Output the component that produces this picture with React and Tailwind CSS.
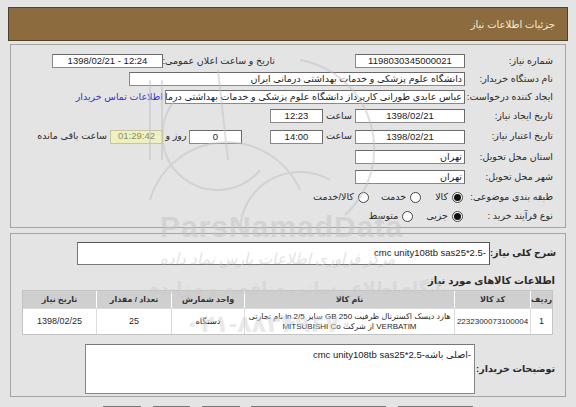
import React from "react";

const inp = "h-[14px] bg-white border border-[#8a8a8a] border-t-[#6a6a6a] border-r-[#6a6a6a] flex items-center text-[9.5px] text-[#222] leading-none overflow-hidden whitespace-nowrap";
const txt = "text-[9.5px] text-[#2a2a2a] whitespace-nowrap";

function Radio({ on }) {
  return (
    <span className="inline-flex w-[11px] h-[11px] rounded-full border border-[#444] bg-white items-center justify-center shrink-0">
      {on ? <span className="w-[7px] h-[7px] rounded-full bg-[#111]" /> : null}
    </span>
  );
}

function Label({ children, w = "w-[88px]" }) {
  return <div className={`${w} shrink-0 ${txt}`}>{children}</div>;
}

export default function App() {
  return (
    <div
      dir="rtl"
      className="relative w-[576px] h-[407px] overflow-hidden bg-[#e4e4e4]"
      style={{ fontFamily: '"Liberation Sans", "DejaVu Sans", Tahoma, sans-serif' }}
    >
      {/* header */}
      <div className="mt-[7px] mx-[8px] h-[34px] bg-[#8c6c3e] border border-[#4f4030] flex items-center pr-[12px] text-[10px] text-[#f3ecdc]">
        جزئیات اطلاعات نیاز
      </div>

      {/* section 1 */}
      <div className="mt-[3px] mx-[10px] h-[184px] border border-[#a4a4a4] pt-[7px] pr-[12px]">
        {/* row 1 */}
        <div className="h-[18px] flex items-center">
          <Label>شماره نیاز:</Label>
          <div className={`${inp} w-[110px] justify-center`}>1198030345000021</div>
          <div className="w-[80px]" />
          <Label w="w-[112px]">تاریخ و ساعت اعلان عمومی:</Label>
          <div className={`${inp} w-[111px] justify-center`} dir="ltr">1398/02/21 - 12:24</div>
        </div>
        {/* row 2 */}
        <div className="h-[18px] flex items-center">
          <Label>نام دستگاه خریدار:</Label>
          <div className={`${inp} w-[336px] pr-[2px]`}>دانشگاه علوم پزشکی و خدمات بهداشتی درمانی ایران</div>
        </div>
        {/* row 3 */}
        <div className="h-[18px] flex items-center">
          <Label>ایجاد کننده درخواست:</Label>
          <div className={`${inp} w-[300px] pr-[2px]`}>عباس عابدی طورانی کارپرداز دانشگاه علوم پزشکی و خدمات بهداشتی درمانی</div>
          <div className="mr-[2px] text-[9.5px] text-[#3434c4] whitespace-nowrap">اطلاعات تماس خریدار</div>
        </div>
        {/* row 4 */}
        <div className="h-[20px] flex items-center">
          <Label>تاریخ ایجاد نیاز:</Label>
          <div className={`${inp} w-[110px] justify-center`}>1398/02/21</div>
          <div className={`w-[32px] text-center ${txt}`}>ساعت</div>
          <div className={`${inp} w-[53px] justify-center`}>12:23</div>
        </div>
        {/* row 5 */}
        <div className="h-[21px] flex items-center">
          <Label>تاریخ اعتبار نیاز:</Label>
          <div className={`${inp} w-[110px] justify-center`}>1398/02/21</div>
          <div className={`w-[32px] text-center ${txt}`}>ساعت</div>
          <div className={`${inp} w-[53px] justify-center`}>14:00</div>
          <div className="w-[28px]" />
          <div className={`${inp} w-[53px] justify-center`}>0</div>
          <div className={`w-[26px] text-center ${txt}`}>روز و</div>
          <div className="h-[14px] w-[53px] bg-[#efefc4] border border-[#c6c69a] flex items-center justify-center text-[9.5px] text-[#8f8f58]">01:29:42</div>
          <div className={`mr-[3px] ${txt}`}>ساعت باقی مانده</div>
        </div>
        {/* row 6 */}
        <div className="h-[20px] flex items-center">
          <Label>استان محل تحویل:</Label>
          <div className={`${inp} w-[110px] pr-[2px]`}>تهران</div>
        </div>
        {/* row 7 */}
        <div className="h-[20px] flex items-center">
          <Label>شهر محل تحویل:</Label>
          <div className={`${inp} w-[110px] pr-[2px]`}>تهران</div>
        </div>
        {/* row 8 */}
        <div className="h-[20px] flex items-center">
          <Label w="w-[90px]">طبقه بندی موضوعی:</Label>
          <Radio on />
          <span className={`mr-[4px] ${txt}`}>کالا</span>
          <span className="mr-[14px]" />
          <Radio />
          <span className={`mr-[4px] ${txt}`}>خدمت</span>
          <span className="mr-[12px]" />
          <Radio />
          <span className={`mr-[4px] ${txt}`}>کالا/خدمت</span>
        </div>
        {/* row 9 */}
        <div className="h-[18px] flex items-center">
          <Label w="w-[90px]">نوع فرآیند خرید :</Label>
          <Radio on />
          <span className={`mr-[4px] ${txt}`}>جزیی</span>
          <span className="mr-[13px]" />
          <Radio />
          <span className={`mr-[4px] ${txt}`}>متوسط</span>
        </div>
      </div>

      {/* section 2 */}
      <div className="mt-[5px] mx-[10px] h-[164px] border border-[#a4a4a4] pt-[8px]">
        <div className="flex items-center h-[23px] pr-[9px]">
          <div className="w-[66px] shrink-0 text-[9.5px] font-bold text-[#2a2a2a] whitespace-nowrap">شرح کلی نیاز:</div>
          <div className="w-[413px] h-[23px] bg-white border border-[#777] border-t-[#555] border-r-[#555] pr-[3px] pt-[3px] text-[9.5px] text-[#222]">-cmc unity108tb sas25*2.5</div>
        </div>
        <div className="mt-[8px] h-[14px] pr-[10px] text-[10px] font-bold text-[#2a2a2a] flex items-center">اطلاعات کالاهای مورد نیاز</div>
        <div className="mt-[3px] mr-[12px] w-[531px] border border-[#c4c4c4] bg-[#f4f4f4]">
          <div className="flex h-[17px] text-[8px] font-bold text-[#333]">
            <div className="w-[22px] bg-[#cfcfcf] border-l border-white flex items-center justify-center">ردیف</div>
            <div className="w-[76px] bg-[#cfcfcf] border-l border-white flex items-center justify-center">کد کالا</div>
            <div className="w-[210px] bg-[#cfcfcf] border-l border-white flex items-center justify-center">نام کالا</div>
            <div className="w-[73px] bg-[#cfcfcf] border-l border-white flex items-center justify-center">واحد شمارش</div>
            <div className="w-[75px] bg-[#cfcfcf] border-l border-white flex items-center justify-center">تعداد / مقدار</div>
            <div className="flex-1 bg-[#cfcfcf] flex items-center justify-center">تاریخ نیاز</div>
          </div>
          <div className="flex h-[26px] text-[9px] text-[#2a2a2a] bg-white border-t border-[#dcdcdc]">
            <div className="w-[22px] border-l border-[#dcdcdc] flex items-center justify-center">1</div>
            <div className="w-[76px] border-l border-[#dcdcdc] flex items-center justify-center text-[8px]">2232300073100004</div>
            <div className="w-[210px] border-l border-[#dcdcdc] flex flex-col items-center justify-center text-[8px] leading-[10px] text-center overflow-hidden">
              <span className="whitespace-nowrap">هارد دیسک اکسترنال ظرفیت 250 GB سایز 2/5 in نام تجارتی</span>
              <span className="whitespace-nowrap">VERBATIM از شرکت MITSUBISHI Co</span>
            </div>
            <div className="w-[73px] border-l border-[#dcdcdc] flex items-center justify-center text-[8.5px]">دستگاه</div>
            <div className="w-[75px] border-l border-[#dcdcdc] flex items-center justify-center">25</div>
            <div className="flex-1 flex items-center justify-center">1398/02/25</div>
          </div>
        </div>
        <div className="mt-[9px] flex items-center pr-[10px]">
          <div className="w-[80px] shrink-0 text-[9.5px] font-bold text-[#2a2a2a] whitespace-nowrap">توضیحات خریدار:</div>
          <div className="w-[390px] h-[50px] bg-white border border-[#888] border-t-[#777] pr-[3px] pt-[3px] text-[9.5px] text-[#222]">-اصلی باشه-cmc unity108tb sas25*2.5</div>
        </div>
      </div>

      {/* buttons (cut off) */}
      <div className="mt-[9px] flex h-[12px]" dir="ltr">
        <div className="ml-[103px] w-[38px] h-[12px] bg-[#ffdede] border border-[#777]" />
        <div className="ml-[12px] w-[37px] h-[12px] bg-[#ffdede] border border-[#777]" />
        <div className="ml-[12px] w-[38px] h-[12px] bg-[#eafdea] border border-[#777]" />
        <div className="ml-[11px] w-[135px] h-[12px] bg-[#eafdea] border border-[#777]" />
        <div className="ml-[12px] w-[75px] h-[12px] bg-[#eafdea] border border-[#777]" />
      </div>

      {/* watermark overlay */}
      <div className="pointer-events-none absolute inset-0 opacity-50">
        <svg className="absolute left-0 top-0" width="576" height="407" viewBox="0 0 576 407" fill="none" stroke="#c2c2c2" strokeWidth="2">
          <path d="M150 80 L150 160" />
          <path d="M162 80 L162 160" />
          <path d="M218 70 L228 160" />
          <path d="M150 200 A 80 80 0 0 1 300 190" />
          <path d="M240 230 A 60 60 0 0 1 330 180" />
          <path d="M300 60 A 90 90 0 0 1 345 215" />
          <path d="M175 100 A 40 40 0 0 0 260 170" />
        </svg>
        <div dir="ltr" className="absolute left-[160px] top-[212px] text-[30px] font-bold text-[#c4c4c4] leading-none tracking-[1px]">ParsNamadData</div>
        <div className="absolute left-[160px] top-[248px] text-[15px] italic text-[#c8c8c8] whitespace-nowrap">مرکز فراوری اطلاعات پارس نماد داده</div>
        <div className="absolute left-[150px] top-[276px] text-[17px] font-bold text-[#cdcdcd] whitespace-nowrap">پایگاه اطلاع رسانی مناقصه و مزایده</div>
        <div dir="ltr" className="absolute left-[185px] top-[306px] text-[24px] font-bold text-[#d4d4d4] whitespace-nowrap">۰۲۱-۸۸۳۴۹۶۷۰</div>
      </div>
    </div>
  );
}
